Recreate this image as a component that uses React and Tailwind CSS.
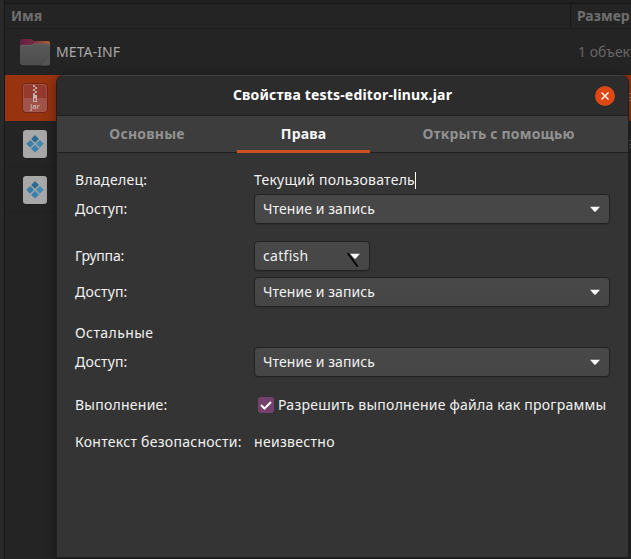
import React from "react";

function FolderIcon() {
  return (
    <svg width="32" height="30" viewBox="0 0 32 30" className="mr-px block">
      <defs>
        <linearGradient id="folder-tab" x1="0" x2="1">
          <stop offset="0" stopColor="#661f40" />
          <stop offset="0.4" stopColor="#742a42" />
          <stop offset="1" stopColor="#b5602c" />
        </linearGradient>
        <linearGradient id="folder-front" x1="0" y1="0" x2="0" y2="1">
          <stop offset="0" stopColor="#595959" />
          <stop offset="1" stopColor="#4c4c4c" />
        </linearGradient>
      </defs>
      <path d="M1 4Q1 2 3 2H11.500Q13 2 14 3.200L14.700 4H29Q31 4 31 6V15H1Z" fill="url(#folder-tab)" />
      <path d="M1 9.500Q1 8 3 8H12Q13.500 8 14.500 7.200L15.200 6.700H29Q31 6.700 31 8.700V26.500Q31 28.500 29 28.500H3Q1 28.500 1 26.500Z" fill="url(#folder-front)" />
      <path d="M1.500 9Q2 8.300 3 8.300H12Q13.500 8.300 14.500 7.500L15.200 7H29Q30.500 7 30.800 8.200" fill="none" stroke="#696969" strokeWidth="0.700" />
      <path d="M1 27Q1.300 29 3 29H29Q30.700 29 31 27" fill="none" stroke="#1a1a1a" strokeWidth="0.700" />
      <path d="M31 19.500L22 28.500H29Q31 28.500 31 26.500Z" fill="#555555" />
    </svg>
  );
}

function JarIcon() {
  return (
    <svg width="26" height="30" viewBox="0 0 26 30" className="block">
      <rect x="0.500" y="0.500" width="25" height="29" rx="3.500" fill="#963a2e" stroke="#742517" />
      <path d="M1.500 15H24.500V26Q24.500 28.500 22 28.500H4Q1.500 28.500 1.500 26Z" fill="#a05348" />
      <rect x="1.500" y="1.500" width="23" height="27" rx="2.500" fill="none" stroke="#b0685c" strokeWidth="0.500" />
      <g fill="#b9aaa7">
        <rect x="11" y="2" width="2" height="2" />
        <rect x="13" y="4" width="2" height="2" />
        <rect x="11" y="6" width="2" height="2" />
        <rect x="13" y="8" width="2" height="2" />
        <rect x="11" y="10" width="2" height="2" />
      </g>
      <path d="M11 12H15V19H11ZM12 15.500V18H14V15.500Z" fill="#c3b4b1" fillRule="evenodd" />
      <text x="13" y="26" textAnchor="middle" fontFamily="Noto Sans, sans-serif" fontSize="7.500" fontWeight="500" fill="#d0bab6">jar</text>
    </svg>
  );
}

function ModuleIcon() {
  return (
    <svg width="26" height="30" viewBox="0 0 26 30" className="block">
      <rect x="1" y="1.500" width="24" height="28" rx="3" fill="#1a1a1a" />
      <rect x="1" y="1" width="24" height="28" rx="3" fill="#a8a8a8" />
      <path d="M13 6L16.900 9.900L13 13.800L9.100 9.900Z" fill="#2b6b92" />
      <path d="M8.200 10.900L12.100 14.800L8.200 18.700L4.300 14.800Z" fill="#397ea5" />
      <path d="M17.800 10.900L21.700 14.800L17.800 18.700L13.900 14.800Z" fill="#4389b0" />
      <path d="M13 15.800L16.900 19.700L13 23.600L9.100 19.700Z" fill="#3681b0" />
    </svg>
  );
}

function Row({ label, labelClass = "", children, className = "h-[30px]" }) {
  return (
    <div className={`flex items-center ${className}`}>
      <div className="w-[179px] shrink-0">
        <span className={labelClass}>{label}</span>
      </div>
      {children}
    </div>
  );
}

function Combo({ children, width = "w-[356px]", pointer = false, textClass = "tracking-[0.08px]" }) {
  return (
    <div className={`flex h-[30px] items-center justify-between rounded-[4px] border border-[#222222] bg-linear-to-b from-[#484848] to-[#464646] pr-[9px] pl-2 shadow-[0_1px_1px_rgba(0,0,0,0.12)] ${width}`}>
      <span className={textClass}>{children}</span>
      <span className="relative">
        <svg width="10" height="6" viewBox="0 0 10 6" className="block">
          <path d="M0 0.700H10L5.500 5.800H4.500Z" fill="#f7f7f7" />
        </svg>
        {pointer && (
          <svg width="14" height="16" viewBox="0 0 14 16" className="absolute -top-px -left-[3px]">
            <path d="M1.200 1.800L10.200 14" stroke="#050505" strokeWidth="1.900" strokeLinecap="round" />
          </svg>
        )}
      </span>
    </div>
  );
}

function ListRow({ icon, name, size, className }) {
  return (
    <div className={`flex items-center ${className}`}>
      <div className="flex w-[47px] shrink-0 justify-end">{icon}</div>
      <span className="w-[519px] shrink-0 pl-1 tracking-[0.1px] text-[#a9a9a9]">{name}</span>
      <span className="pl-[7px] text-[#666666]">{size}</span>
    </div>
  );
}

export default function App() {
  return (
    <div className="relative flex h-[559px] w-[631px] overflow-hidden bg-[#242424] font-['Noto_Sans','Open_Sans',sans-serif] text-sm leading-5 whitespace-nowrap text-[#f2f2f2]">
      <div className="w-[5px] shrink-0 border-r border-[#161616] bg-[#292929]" />
      <div className="flex min-w-0 flex-1 flex-col">
        <div className="h-1 shrink-0 border-b border-[#161616] bg-[#202020]" />
        <div className="flex h-[25px] shrink-0 items-center border-b border-[#1d1d1d] font-bold text-[#6f6f6f]">
          <div className="flex h-full w-[566px] shrink-0 items-center border-r border-[#1a1a1a] pl-[6px]">Имя</div>
          <div className="pl-[6px]">Размер</div>
        </div>
        <ListRow className="h-[46px] shrink-0" icon={<FolderIcon />} name="META-INF" size="1 объект" />
        <ListRow className="h-[46px] shrink-0 bg-[#97330f] [&>div]:pr-1" icon={<JarIcon />} size="" />
        <ListRow className="h-[46px] shrink-0 border-b border-[#202020] [&>div]:pr-1" icon={<ModuleIcon />} size="" />
        <ListRow className="h-[46px] shrink-0 border-b border-[#202020] [&>div]:pr-1" icon={<ModuleIcon />} size="" />
      </div>

      <div className="absolute top-[93px] left-[629px] flex flex-col gap-[39px]">
        <div className="flex h-2 w-[2px] flex-col justify-between">
          <i className="h-px bg-[#ba765e]" /><i className="h-px bg-[#ba765e]" /><i className="h-px bg-[#ba765e]" />
        </div>
        <div className="flex h-2 w-[2px] flex-col justify-between">
          <i className="h-px bg-[#555555]" /><i className="h-px bg-[#555555]" /><i className="h-px bg-[#555555]" />
        </div>
      </div>

      <div className="absolute top-[75px] left-[56px] flex h-[483px] w-[573px] flex-col overflow-hidden rounded-t-[8px] border border-t-0 border-[#1f1f1f] bg-[#343434] shadow-[0_2px_12px_1px_rgba(0,0,0,0.35)]">
        <div className="flex h-[41px] shrink-0 items-center border-t border-b border-t-[#3f3f3f] border-b-[#1f1f1f] bg-[#2c2c2c]">
          <div className="w-[33px] shrink-0" />
          <div className="flex-1 pb-[2px] text-center font-bold tracking-[0.18px] text-white">Свойства tests-editor-linux.jar</div>
          <div className="mr-[13px] flex size-5 items-center justify-center rounded-full bg-[#dd4814]">
            <svg width="8" height="8" viewBox="0 0 8 8">
              <path d="M0.500 0.500L7.500 7.500M7.500 0.500L0.500 7.500" stroke="#fff" strokeWidth="1.300" />
            </svg>
          </div>
        </div>
        <div className="flex h-[37px] shrink-0 border-b border-[#202020] bg-[#3d3d3d] font-bold text-[#929292]">
          <div className="flex w-[180px] items-center justify-center"><span className="tracking-[0.2px]">Основные</span></div>
          <div className="-mb-px flex w-[133px] items-center justify-center border-b-[3px] border-[#cd5023] pt-[2px] text-[#f7f7f7]"><span className="tracking-[0.15px]">Права</span></div>
          <div className="flex flex-1 items-center justify-center pr-px"><span className="tracking-[0.18px]">Открыть с помощью</span></div>
        </div>
        <div className="flex flex-col pt-[17px] pl-[18px]">
          <Row label="Владелец:" labelClass="tracking-[0.32px]" className="h-5">
            <span className="tracking-[0.23px]">Текущий пользователь</span>
            <span className="h-[17px] w-px bg-white" />
          </Row>
          <Row label="Доступ:" labelClass="tracking-[0.18px]" className="mt-1 h-[30px]"><Combo>Чтение и запись</Combo></Row>
          <Row label="Группа:" labelClass="tracking-[-0.2px]" className="mt-[17px] h-[30px]"><Combo width="w-[116px]" textClass="tracking-[0.3px]" pointer>catfish</Combo></Row>
          <Row label="Доступ:" labelClass="tracking-[0.18px]" className="mt-[6px] h-[30px]"><Combo>Чтение и запись</Combo></Row>
          <Row label="Остальные" labelClass="tracking-[0.42px]" className="mt-4 h-5" />
          <Row label="Доступ:" labelClass="tracking-[0.18px]" className="mt-1 h-[30px]"><Combo>Чтение и запись</Combo></Row>
          <Row label="Выполнение:" labelClass="tracking-[0.25px]" className="mt-[18px] h-5">
            <span className="ml-1 flex size-4 items-center justify-center rounded-[3px] bg-[#74406c]">
              <svg width="12" height="12" viewBox="0 0 12 12">
                <path d="M1 6L4.500 9.500L11 3" fill="none" stroke="#fff" strokeWidth="2" />
              </svg>
            </span>
            <span className="ml-1 tracking-[0.24px]">Разрешить выполнение файла как программы</span>
          </Row>
          <Row label="Контекст безопасности:" labelClass="tracking-[0.27px]" className="mt-[17px] h-5"><span className="tracking-[0.3px]">неизвестно</span></Row>
        </div>
      </div>
    </div>
  );
}
